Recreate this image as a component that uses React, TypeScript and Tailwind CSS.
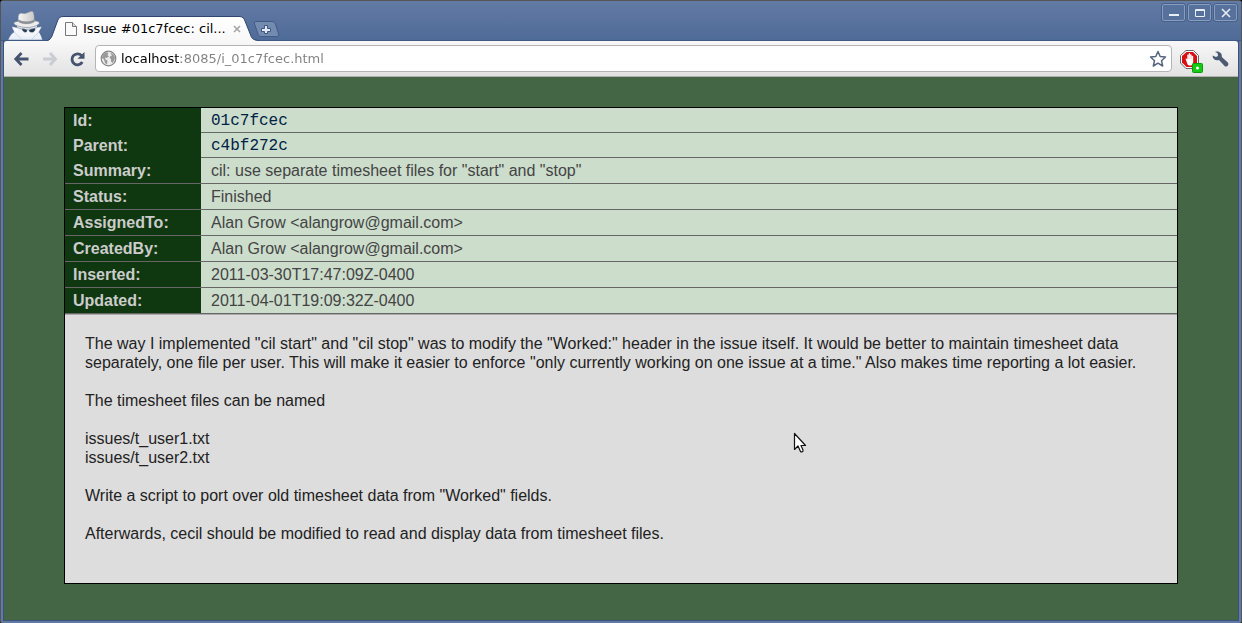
import React from "react";

type Field = { label: string; value: string; code?: boolean; joined?: boolean };

const fields: Field[] = [
  { label: "Id:", value: "01c7fcec", code: true, joined: true },
  { label: "Parent:", value: "c4bf272c", code: true, joined: true },
  { label: "Summary:", value: 'cil: use separate timesheet files for "start" and "stop"' },
  { label: "Status:", value: "Finished" },
  { label: "AssignedTo:", value: "Alan Grow <alangrow@gmail.com>" },
  { label: "CreatedBy:", value: "Alan Grow <alangrow@gmail.com>" },
  { label: "Inserted:", value: "2011-03-30T17:47:09Z-0400" },
  { label: "Updated:", value: "2011-04-01T19:09:32Z-0400" },
];

function SpyIcon() {
  return (
    <svg className="h-[30px] w-[38px] shrink-0" viewBox="0 0 38 30" aria-hidden="true">
      <defs>
        <linearGradient id="coat" x1="0" y1="0" x2="0" y2="1">
          <stop offset="0" stopColor="#ffffff" />
          <stop offset="1" stopColor="#e6edf8" />
        </linearGradient>
        <linearGradient id="hat" x1="0" y1="0" x2="1" y2="0">
          <stop offset="0" stopColor="#f6f6f6" />
          <stop offset="1" stopColor="#c8c8c8" />
        </linearGradient>
      </defs>
      <path d="M3 30C4.500 26 6.500 23.500 9 22L6.500 16.500L12 17.500H31L37 16.500L34 22C35.500 24 37 27 37.500 30Z" fill="url(#coat)" stroke="#3a5280" strokeOpacity=".5" strokeWidth=".8" />
      <path d="M12 15C12 23 16 26.500 22 26.500S32 23 32 15Z" fill="#f2f5fa" />
      <path d="M12 17.500C17 20 27 20 32 17.500" fill="none" stroke="#aab4c6" strokeWidth="1.200" />
      <path d="M9 12.500C11 10.500 31 9.500 34 12C36 14.500 29 17.500 22 17.500S7.500 15 9 12.500Z" fill="#ececec" stroke="#6b7482" strokeWidth=".6" />
      <path d="M13.500 11.500C13 8 13 4.500 15 3.500C17 2.500 18.500 4 20.500 3.500C23 3 25.500 .8 27.500 1.500C29.500 2.500 29 8 29.500 11.500C26 14.500 17 14.500 13.500 11.500Z" fill="url(#hat)" stroke="#8a8f98" strokeWidth=".5" />
      <path d="M13.500 9.500C17 12 26 12 29.300 9.500V11.800C26 14.600 17 14.600 13.500 11.800Z" fill="#8d9096" />
      <path d="M17.500 19C19 19 20.500 19.500 22 20.500C22 22.500 18 23 17.500 19ZM24 20.500C25.500 19.500 28 19 30 18.800C30 23 25 22.800 24 20.500Z" fill="#25364f" stroke="#25364f" strokeWidth=".6" />
      <path d="M9 22L17.500 30M34 22L26 30" stroke="#c3ccda" strokeWidth=".7" fill="none" />
    </svg>
  );
}

function TabShape() {
  return (
    <svg className="absolute inset-0 h-full w-full" viewBox="0 0 212 25" preserveAspectRatio="none" aria-hidden="true">
      <defs>
        <linearGradient id="tab" x1="0" y1="0" x2="0" y2="1">
          <stop offset="0" stopColor="#ffffff" />
          <stop offset="1" stopColor="#f8f8f8" />
        </linearGradient>
      </defs>
      <path d="M0 25C3 24.500 4 22 5 20L10.500 5C11.500 2 13 .5 16 .5H192C195.500 .5 197 2 198 5L204 20C205 23 207 24.500 212 25Z" fill="url(#tab)" />
      <path d="M0 24.500C3 24 4 22 5 20L10.500 5C11.500 2 13 .5 16 .5H192C195.500 .5 197 2 198 5L204 20C205 23 207 24 212 24.500" fill="none" stroke="#2f476f" />
    </svg>
  );
}

const windowButton =
  "flex h-[17px] w-[23px] items-center justify-center rounded-[2px] border border-[#8b9dbd] bg-[#56719c] outline-1 outline-[#46608c]";

function TitleBar() {
  return (
    <header className="flex h-10 items-end border-b border-[#3f5a87] bg-linear-to-b from-[#627ba5] to-[#4f6b97] px-1">
      <SpyIcon />
      <div className="relative -mb-px ml-1 flex h-[25px] w-[212px] shrink-0 items-center">
        <TabShape />
        <div className="relative flex w-full items-center pl-4 pr-[14px]">
          <svg className="h-4 w-4" viewBox="0 0 16 16" aria-hidden="true">
            <path d="M2.500 1.500H9.500L13.500 5.500V14.500H2.500Z" fill="#fafafa" stroke="#777" />
            <path d="M9.500 1.500V5.500H13.500" fill="#ddd" stroke="#777" />
          </svg>
          <span className="ml-1 flex-1 whitespace-nowrap font-['DejaVu_Sans',sans-serif] text-[13px] leading-4 text-black">
            Issue #01c7fcec: cil...
          </span>
          <button type="button" aria-label="Close tab" className="flex h-4 w-4 items-center justify-center">
            <svg className="h-2 w-2" viewBox="0 0 8 8" aria-hidden="true">
              <path d="M1 1L7 7M7 1L1 7" stroke="#a5a5a5" strokeWidth="1.600" />
            </svg>
          </button>
        </div>
      </div>
      <button type="button" aria-label="New tab" className="-ml-[6px] mb-[3px] h-4 w-[26px] shrink-0">
        <svg className="h-4 w-[26px]" viewBox="0 0 26 16" aria-hidden="true">
          <path d="M3 .5H19C21 .5 22 2 22.500 3L25.500 13C26 15 25 15.500 24 15.500H8C6 15.500 5.500 14 5 13L1.500 3C1 1 1.500 .5 3 .5Z" fill="#748bb0" stroke="#405b88" />
          <path d="M11.500 4.500H14.500V7.500H17.500V10.500H14.500V12.500H11.500V10.500H8.500V7.500H11.500Z" fill="#e4eaf3" stroke="#3c5782" />
        </svg>
      </button>
      <div className="ml-auto flex gap-[3px] self-start pt-[3px]">
        <button type="button" aria-label="Minimize" className={windowButton}>
          <svg className="h-3 w-3" viewBox="0 0 12 12" aria-hidden="true"><path d="M1 8H11" stroke="#e9edf4" strokeWidth="2" /></svg>
        </button>
        <button type="button" aria-label="Maximize" className={windowButton}>
          <svg className="h-3 w-3" viewBox="0 0 12 12" aria-hidden="true"><path d="M1.500 2.500H10.500V9.500H1.500Z M1.500 3.500H10.500" fill="none" stroke="#e9edf4" /></svg>
        </button>
        <button type="button" aria-label="Close" className={windowButton}>
          <svg className="h-3 w-3" viewBox="0 0 12 12" aria-hidden="true"><path d="M2 2L10 10M10 2L2 10" stroke="#e9edf4" strokeWidth="1.600" /></svg>
        </button>
      </div>
    </header>
  );
}

function Toolbar() {
  return (
    <nav className="flex h-9 items-center rounded-t-[3px] border-b border-[#b0b0b0] bg-linear-to-b from-[#f8f8f8] to-[#e2e2e2] px-2">
      <button type="button" aria-label="Back" className="h-[18px] w-[18px]">
        <svg viewBox="0 0 18 18" aria-hidden="true"><path d="M9.500 3L3.800 9L9.500 15M4 9H16.500" fill="none" stroke="#45536e" strokeWidth="2.800" /></svg>
      </button>
      <button type="button" aria-label="Forward" className="ml-[10px] h-[18px] w-[18px]">
        <svg viewBox="0 0 18 18" aria-hidden="true"><path d="M10 3L15.500 9L10 15M15 9H3" fill="none" stroke="#c9ccd2" strokeWidth="2.800" /></svg>
      </button>
      <button type="button" aria-label="Reload" className="ml-[10px] h-[18px] w-[18px]">
        <svg viewBox="0 0 18 18" aria-hidden="true">
          <path d="M13.500 5.500A5.500 5.500 0 1 0 14.300 12" fill="none" stroke="#45536e" strokeWidth="2.800" />
          <path d="M16.500 2V8.800H9.500Z" fill="#45536e" />
        </svg>
      </button>
      <div className="ml-[9px] flex h-[27px] flex-1 items-center rounded-[4px] border border-[#b4b4b4] bg-white px-1">
        <svg className="h-[17px] w-[17px] shrink-0" viewBox="0 0 17 17" aria-hidden="true">
          <circle cx="8.500" cy="8.500" r="7.300" fill="#ededed" stroke="#868686" strokeWidth="1.200" />
          <path d="M2.500 5L6 2L8.500 3L7.500 5L9 6.500L6.500 8L5 7.500L5.500 9.500L7.500 10.500L7 14.500L5 13L4 9.500L2 8ZM10 2.500L13 4L15 7L14.500 10L12.500 13L11 11.500V9L9.500 8L10.500 6L12 5.500Z" fill="#999" />
        </svg>
        <input
          id="address"
          type="text"
          aria-label="Address"
          defaultValue="localhost:8085/i_01c7fcec.html"
          className="ml-1 h-5 min-w-0 flex-1 bg-[linear-gradient(90deg,#000_60px,#808080_60px)] bg-clip-text font-['DejaVu_Sans',sans-serif] text-[13px] text-transparent outline-none"
        />
        <button type="button" aria-label="Bookmark this page" className="h-[18px] w-[18px] shrink-0">
          <svg viewBox="0 0 18 18" aria-hidden="true">
            <path d="M9 1.500L11.200 6.500L16.500 7L12.500 10.700L13.700 16L9 13.200L4.300 16L5.500 10.700L1.500 7L6.800 6.500Z" fill="#fff" stroke="#56647e" strokeWidth="1.500" strokeLinejoin="round" />
          </svg>
        </button>
      </div>
      <button type="button" aria-label="Content blocker" className="ml-2 h-7 w-6">
        <svg viewBox="0 0 24 28" aria-hidden="true">
          <path d="M6 5.500H13.500L18.500 10.500V18L13.500 23.500H6L.5 18V10.500Z" fill="#fff" stroke="#666" />
          <path d="M6.500 7H13L17 11V17.500L13 22H6.500L2 17.500V11Z" fill="#d80f12" />
          <path d="M5.500 13.500Q6.500 13 7.300 14.500V10Q8 9 8.700 10V8.500Q9.400 7.500 10.100 8.500V9.500Q10.900 8.700 11.600 9.700V11Q12.500 10.300 13.200 11.300V17Q13 20 11.500 20.500H9Q7.500 20 7 18Z" fill="#fff" />
          <path d="M8.700 10V14M10.100 9.500V14M11.600 10.500V14" stroke="#e99" strokeWidth=".4" />
          <rect x="12.500" y="18.500" width="10" height="9" rx="1" fill="#16ca16" stroke="#0c9a0c" />
          <circle cx="17.500" cy="23" r="1.500" fill="#fff" />
        </svg>
      </button>
      <button type="button" aria-label="Settings" className="ml-2 h-[18px] w-[18px]">
        <svg viewBox="0 0 18 18" aria-hidden="true">
          <path d="M.5 5.500L4 7L6 6L5.500 3L3 2C6.500 .5 10.500 3 9.800 7L15.800 12.500C17.500 15 15 17.500 12.800 16.300L7 10C3.500 11 .5 9 .5 5.500Z" fill="#4c5972" />
        </svg>
      </button>
    </nav>
  );
}

function FieldTable() {
  return (
    <table className="w-full border-separate border-spacing-0 text-left text-base leading-5">
      <tbody>
        {fields.map((f) => (
          <tr key={f.label} className={f.joined ? "h-[25px]" : "h-[26px]"}>
            <th
              scope="row"
              className={
                f.joined
                  ? "w-[136px] bg-[#103810] p-0 pl-2 font-bold text-[#cccccc]"
                  : "w-[136px] border-b border-[#666666] bg-[#103810] p-0 pl-2 font-bold text-[#cccccc]"
              }
            >
              {f.label}
            </th>
            <td className="border-b border-[#666666] bg-[#ccddcc] p-0 pl-[10px] text-[#444444]">
              {f.code ? (
                <a href={"i_" + f.value + ".html"} className="font-['Liberation_Mono',monospace] text-base leading-5 text-[#002244]">
                  {f.value}
                </a>
              ) : (
                f.value
              )}
            </td>
          </tr>
        ))}
      </tbody>
    </table>
  );
}

export default function App() {
  return (
    <div className="bg-black">
      <div className="relative flex min-h-screen flex-col rounded-[3px] border border-[#555555] bg-[#6079a5] font-['Liberation_Sans',Arial,sans-serif]">
        <TitleBar />
        <div className="mx-[2px] mb-[2px] flex flex-1 flex-col border-x border-b border-[#3a527e] bg-[#4f6b97]">
          <Toolbar />
          <main className="flex-1 bg-[#446644] px-[60px] pb-9 pt-[30px]">
            <article className="border border-black bg-[#dddddd]">
              <FieldTable />
              <div className="flex flex-col gap-[19px] border-t border-[#aaaaaa] px-5 pb-10 pt-[19px] text-base leading-[19px] text-[#222222]">
                <p>
                  The way I implemented "cil start" and "cil stop" was to modify the "Worked:" header in the issue itself. It
                  would be better to maintain timesheet data separately, one file per user. This will make it easier to enforce
                  "only currently working on one issue at a time." Also makes time reporting a lot easier.
                </p>
                <p>The timesheet files can be named</p>
                <p>
                  issues/t_user1.txt
                  <br />
                  issues/t_user2.txt
                </p>
                <p>Write a script to port over old timesheet data from "Worked" fields.</p>
                <p>Afterwards, cecil should be modified to read and display data from timesheet files.</p>
              </div>
            </article>
          </main>
        </div>
        <svg className="absolute left-[792px] top-[431px] h-[22px] w-4" viewBox="0 0 16 22" aria-hidden="true">
          <path d="M1.500 1.500V17.500L5 14L7.500 19.500C8.500 20.500 10.500 19.500 10 18L8 13.500H12.500Z" fill="#fff" stroke="#111" strokeWidth="1.200" strokeLinejoin="round" />
        </svg>
      </div>
    </div>
  );
}
